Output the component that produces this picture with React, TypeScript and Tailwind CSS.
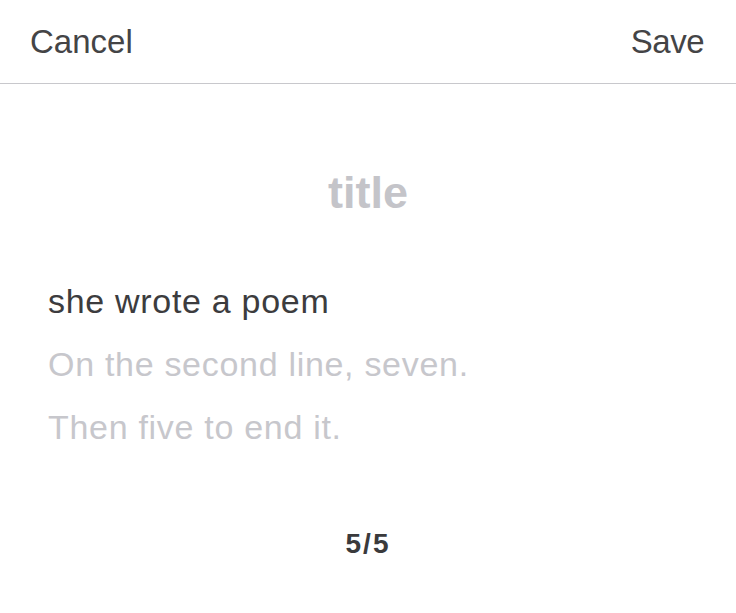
import React from "react";

export default function App() {
  const font = { fontFamily: '"Liberation Sans", Arial, sans-serif' };
  return (
    <div className="w-[736px] h-[613px] bg-white overflow-hidden" style={font}>
      <div className="h-[83px] flex items-center justify-between pl-[30px] pr-[32px] border-b border-[#c8c8cc] box-content">
        <span className="text-[33px] text-[#444446] leading-none">Cancel</span>
        <span className="text-[33px] text-[#444446] leading-none tracking-[-0.5px]">Save</span>
      </div>
      <div className="mt-[86px] text-center text-[45px] font-bold leading-none text-[#c4c4c9]">title</div>
      <div className="mt-[55px] pl-[48px] flex flex-col text-[34px] leading-[63px] tracking-[0.7px]">
        <div className="text-[#3c3c3e]">she wrote a poem</div>
        <div className="text-[#c7c7cc]">On the second line, seven.</div>
        <div className="text-[#c7c7cc]">Then five to end it.</div>
      </div>
      <div className="mt-[71px] text-center text-[28px] font-bold leading-none text-[#3a3a3c] tracking-[2px]">5/5</div>
    </div>
  );
}
